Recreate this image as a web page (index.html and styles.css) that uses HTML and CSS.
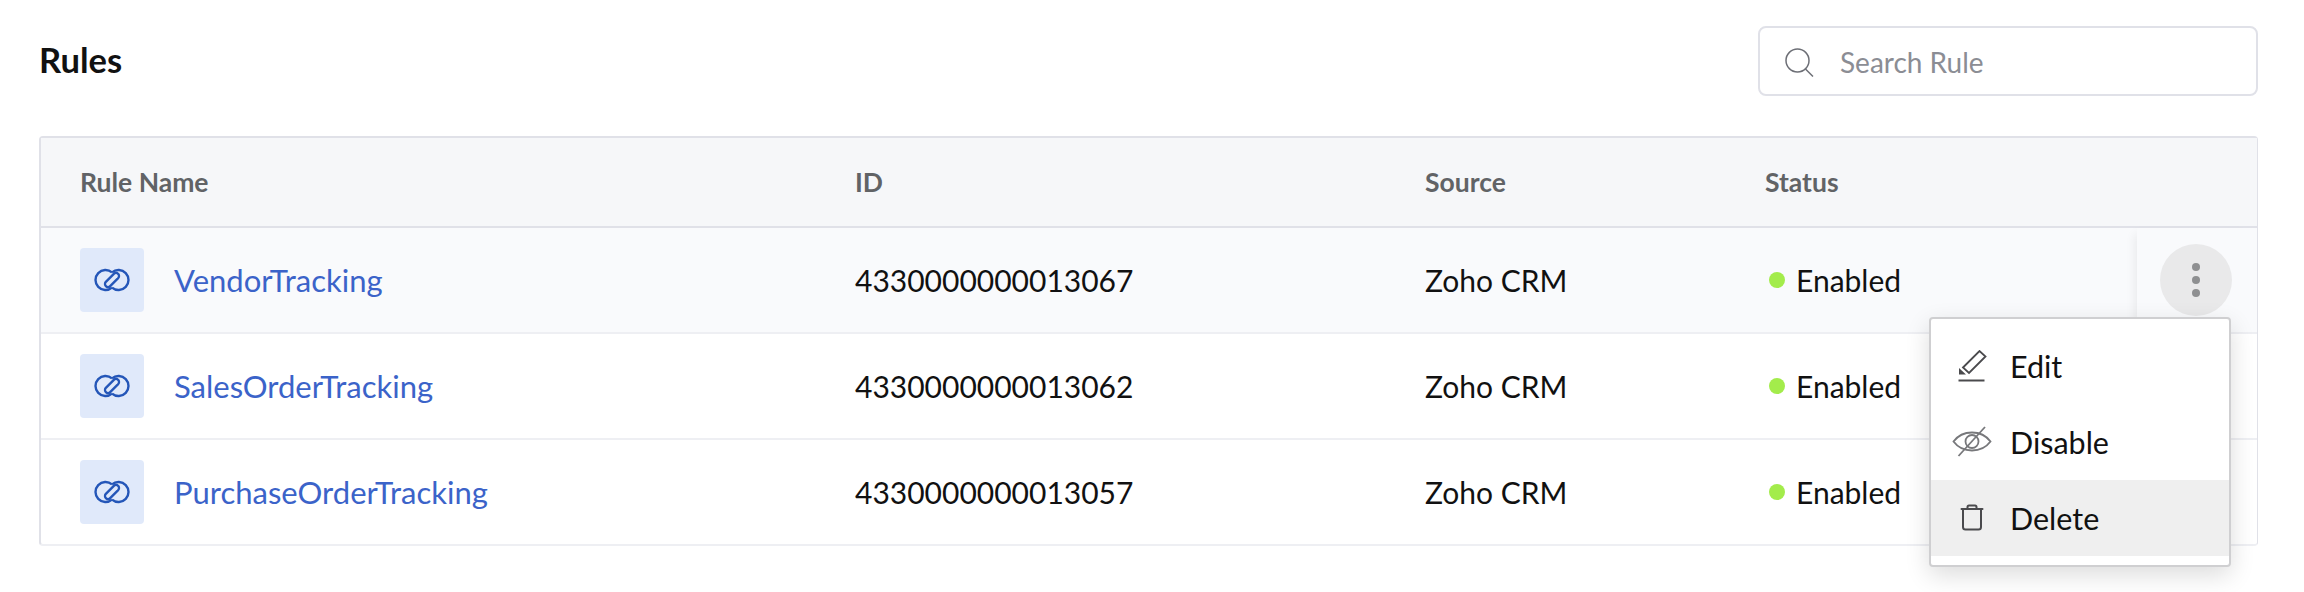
FILE: index.html
```html
<!DOCTYPE html>
<html lang="en">
<head>
    <meta charset="UTF-8">
    <title>Rules</title>
    <link rel="stylesheet" href="styles.css">
</head>
<body>
    <svg class="icon-defs" width="0" height="0">
        <symbol id="link-icon" viewBox="0 0 36 24">
            <path d="M18 4.400A10 10 0 1 0 18 19.600M18 4.400A10 10 0 1 1 18 19.600" fill="none" stroke="currentColor" stroke-width="2.400"/>
            <path d="M14 16L22 8" fill="none" stroke="currentColor" stroke-width="8.400" stroke-linecap="round"/>
            <path d="M14 16L22 8" fill="none" stroke="#e0e9fa" stroke-width="3.800" stroke-linecap="round"/>
        </symbol>
    </svg>

    <div class="page">
        <header class="page-head">
            <h1>Rules</h1>
            <div class="search">
                <svg class="search-icon" viewBox="0 0 29 29">
                    <circle cx="12.500" cy="12.500" r="11.500" fill="none" stroke="currentColor" stroke-width="1.500"/>
                    <path d="M20.500 21l7.500 7.500" fill="none" stroke="currentColor" stroke-width="1.500"/>
                </svg>
                <span class="search-text">Search Rule</span>
            </div>
        </header>

        <div class="rules-table">
            <div class="row row-head">
                <div>Rule Name</div>
                <div>ID</div>
                <div>Source</div>
                <div>Status</div>
            </div>

            <div class="row row-active">
                <div class="rule-name">
                    <span class="rule-icon"><svg><use href="#link-icon"/></svg></span>
                    <a href="#">VendorTracking</a>
                </div>
                <div>4330000000013067</div>
                <div>Zoho CRM</div>
                <div class="status"><span class="dot"></span>Enabled</div>
                <div class="row-actions">
                    <button class="more-btn"><span></span><span></span><span></span></button>
                </div>
            </div>

            <div class="row">
                <div class="rule-name">
                    <span class="rule-icon"><svg><use href="#link-icon"/></svg></span>
                    <a href="#">SalesOrderTracking</a>
                </div>
                <div>4330000000013062</div>
                <div>Zoho CRM</div>
                <div class="status"><span class="dot"></span>Enabled</div>
            </div>

            <div class="row">
                <div class="rule-name">
                    <span class="rule-icon"><svg><use href="#link-icon"/></svg></span>
                    <a href="#">PurchaseOrderTracking</a>
                </div>
                <div>4330000000013057</div>
                <div>Zoho CRM</div>
                <div class="status"><span class="dot"></span>Enabled</div>
            </div>

            <ul class="menu">
                <li>
                    <svg class="menu-icon" viewBox="0 0 40 32">
                        <path d="M11 17.500L27.500 1l6 5.500L17 23z" fill="none" stroke="currentColor" stroke-width="1.800"/>
                        <path d="M7 18l7 6.500H7z" fill="currentColor"/>
                        <path d="M6.500 30.500h26" fill="none" stroke="currentColor" stroke-width="2"/>
                    </svg>
                    Edit
                </li>
                <li>
                    <svg class="menu-icon eye" viewBox="0 0 40 32">
                        <path d="M1.500 15.500C6 9.500 12.500 6.500 20 6.500s14 3 18.500 9c-4.500 6-11 9-18.500 9s-14-3-18.500-9z" fill="none" stroke="currentColor" stroke-width="1.800"/>
                        <circle cx="20" cy="15.500" r="6.500" fill="none" stroke="currentColor" stroke-width="1.800"/>
                        <path d="M6.500 30L33 1" fill="none" stroke="currentColor" stroke-width="1.800"/>
                    </svg>
                    Disable
                </li>
                <li class="is-hover">
                    <svg class="menu-icon" viewBox="0 0 40 32">
                        <path d="M9.500 7h21M15.500 6.500V5c0-1 .6-1.500 1.500-1.500h6c1 0 1.500.6 1.500 1.500v1.500" fill="none" stroke="currentColor" stroke-width="2" stroke-linecap="round"/>
                        <path d="M11 8v17c0 1.500 1 2.500 2.500 2.500h13c1.500 0 2.500-1 2.500-2.500V8" fill="none" stroke="currentColor" stroke-width="2"/>
                    </svg>
                    Delete
                </li>
            </ul>
        </div>
    </div>
</body>
</html>
```

FILE: styles.css
```css
:root {
    --border: #e0e1e8;
    --row-line: #eeeff3;
    --link: #3b63c9;
}

body {
    margin: 0;
    font-family: 'Lato', sans-serif;
    color: #111;
    background: #fff;
}

.icon-defs {
    position: absolute;
}

.page {
    box-sizing: border-box;
    min-height: 100vh;
    padding: 26px 46px 0 39px;
}

.page-head {
    display: flex;
    justify-content: space-between;
    align-items: center;
    height: 70px;
    margin-bottom: 40px;
}

h1 {
    margin: 0 0 3px;
    font-size: 34.500px;
    font-weight: 700;
}

.search {
    display: flex;
    align-items: center;
    box-sizing: border-box;
    width: 500px;
    height: 70px;
    padding-left: 25px;
    border: 2px solid var(--border);
    border-radius: 8px;
}

.search-icon {
    width: 29px;
    height: 29px;
    margin-top: 2px;
    color: #6d6f76;
}

.search-text {
    margin: 2px 0 0 26px;
    font-size: 28px;
    color: #8b8d94;
}

.rules-table {
    position: relative;
    box-sizing: border-box;
    height: 410px;
    border: 2px solid var(--border);
    border-right-width: 1px;
    border-bottom-color: var(--row-line);
    border-radius: 4px;
}

.row {
    position: relative;
    display: grid;
    grid-template-columns: 775px 570px 340px 1fr;
    align-items: center;
    box-sizing: border-box;
    height: 106px;
    padding-left: 39px;
    font-size: 30px;
    border-bottom: 2px solid var(--row-line);
}

.row:last-of-type {
    border-bottom-color: transparent;
}

.row-head {
    height: 90px;
    background: #f6f7f9;
    font-size: 26.500px;
    font-weight: 700;
    color: #616366;
    border-bottom: 2px solid var(--border);
}

.row-active {
    background: #f9fafc;
}

.rule-name {
    display: flex;
    align-items: center;
    gap: 30px;
}

.rule-name a {
    font-size: 31px;
    color: var(--link);
    text-decoration: none;
}

.rule-icon {
    display: flex;
    align-items: center;
    justify-content: center;
    width: 64px;
    height: 64px;
    border-radius: 4px;
    background: #e0e9fa;
    color: #2456b8;
}

.rule-icon svg {
    width: 36px;
    height: 24px;
}

.status {
    display: flex;
    align-items: center;
}

.dot {
    width: 16px;
    height: 16px;
    margin: 0 11px 0 4px;
    border-radius: 50%;
    background: #a3ec4b;
}

.row-actions {
    position: absolute;
    top: 0;
    right: 0;
    bottom: 0;
    display: flex;
    align-items: center;
    justify-content: center;
    box-sizing: border-box;
    width: 120px;
    padding-right: 3px;
    background: #f9fafc;
    box-shadow: -8px 0 10px -6px rgba(0, 0, 0, 0.07);
}

.more-btn {
    display: flex;
    flex-direction: column;
    align-items: center;
    justify-content: center;
    gap: 5px;
    width: 72px;
    height: 72px;
    padding: 0;
    border: 0;
    border-radius: 50%;
    background: #e9e9ea;
}

.more-btn span {
    width: 8px;
    height: 8px;
    border-radius: 50%;
    background: #8e8f91;
}

.menu {
    position: absolute;
    top: 179px;
    right: 26px;
    box-sizing: border-box;
    width: 302px;
    height: 250px;
    margin: 0;
    padding: 9px 0;
    list-style: none;
    background: #fff;
    border: 2px solid #cfcfd1;
    border-radius: 4px;
    box-shadow: 0 8px 24px rgba(0, 0, 0, 0.14);
}

.menu li {
    display: flex;
    align-items: center;
    height: 76px;
    font-size: 30.500px;
}

.menu li.is-hover {
    background: #efefef;
}

.menu-icon {
    width: 40px;
    height: 32px;
    margin: 0 18px 0 21px;
    color: #4a4a4d;
}

.menu-icon.eye {
    color: #77787b;
}
```
